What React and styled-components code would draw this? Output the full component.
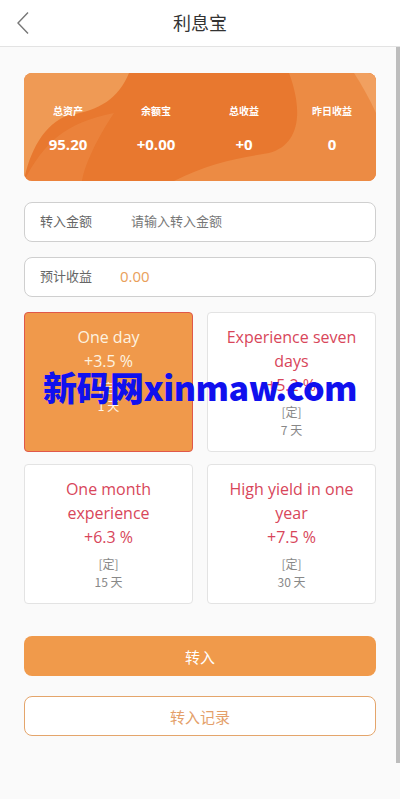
import React from 'react';
import styled, { createGlobalStyle } from 'styled-components';

const GlobalStyle = createGlobalStyle`
  html, body {
    margin: 0;
    padding: 0;
    background: #fafafa;
    font-family: "Noto Sans CJK SC", "Open Sans", sans-serif;
  }
  * { box-sizing: border-box; }
`;

const STATS = [
  { label: '总资产', value: '95.20' },
  { label: '余额宝', value: '+0.00' },
  { label: '总收益', value: '+0' },
  { label: '昨日收益', value: '0' },
];

const PLANS = [
  { title: 'One day', rate: '+3.5 %', days: '1 天', active: true },
  { title: 'Experience seven days', rate: '+5.2 %', days: '7 天' },
  { title: 'One month experience', rate: '+6.3 %', days: '15 天' },
  { title: 'High yield in one year', rate: '+7.5 %', days: '30 天' },
];

const BackIcon = () => (
  <svg width="14" height="24" viewBox="0 0 14 24" fill="none">
    <path d="M12 1.5 L2 12 L12 22.5" stroke="#777" strokeWidth="1.4" />
  </svg>
);

const BannerWaves = () => (
  <WaveSvg viewBox="0 0 352 108" preserveAspectRatio="none">
    <rect width="352" height="108" fill="#e8782f" />
    <path d="M0 0 H105 C95 25 75 38 45 42 C20 50 5 80 0 108 Z" fill="#ef9a55" />
    <path d="M0 108 C20 70 40 50 90 40 C70 70 60 95 58 108 Z" fill="#ec8a45" opacity="0.55" />
    <path d="M265 0 H352 V108 H150 C185 90 215 85 245 80 C275 72 280 40 265 0 Z" fill="#ec8b44" />
    <path d="M330 0 H352 V40 C345 25 338 12 330 0 Z" fill="#f1a060" />
  </WaveSvg>
);

export default function App() {
  return (
    <Page>
      <GlobalStyle />
      <Header>
        <BackButton><BackIcon /></BackButton>
        <Title>利息宝</Title>
      </Header>
      <Content>
        <Banner>
          <BannerWaves />
          {STATS.map((s) => (
            <Stat key={s.label}>
              <StatLabel>{s.label}</StatLabel>
              <StatValue>{s.value}</StatValue>
            </Stat>
          ))}
        </Banner>

        <Field>
          <FieldLabel>转入金额</FieldLabel>
          <Placeholder>请输入转入金额</Placeholder>
        </Field>
        <Field>
          <FieldLabel>预计收益</FieldLabel>
          <Income>0.00</Income>
        </Field>

        <PlanGrid>
          {PLANS.map((p) => (
            <Plan key={p.title} active={p.active}>
              <PlanTitle active={p.active}>{p.title}</PlanTitle>
              <PlanTitle active={p.active}>{p.rate}</PlanTitle>
              <PlanMeta active={p.active}>[定]</PlanMeta>
              <PlanMeta active={p.active}>{p.days}</PlanMeta>
            </Plan>
          ))}
        </PlanGrid>

        <PrimaryButton>转入</PrimaryButton>
        <OutlineButton>转入记录</OutlineButton>
      </Content>
      <Watermark>新码网xinmaw.com</Watermark>
      <ScrollThumb />
    </Page>
  );
}

const Page = styled.div`
  position: relative;
  min-height: 799px;
  background: #fafafa;
`;

const Header = styled.div`
  height: 47px;
  background: #fff;
  border-bottom: 1px solid #e3e3e3;
  display: flex;
  align-items: center;
  justify-content: center;
  position: relative;
`;

const BackButton = styled.div`
  position: absolute;
  left: 16px;
  top: 11px;
  display: flex;
`;

const Title = styled.div`
  font-size: 18px;
  color: #333;
  margin-top: -2px;
`;

const Content = styled.div`
  padding: 26px 24px 40px;
  display: flex;
  flex-direction: column;
`;

const Banner = styled.div`
  position: relative;
  height: 108px;
  border-radius: 8px;
  overflow: hidden;
  display: grid;
  grid-template-columns: repeat(4, 1fr);
  align-items: start;
  padding-top: 30px;
`;

const WaveSvg = styled.svg`
  position: absolute;
  inset: 0;
  width: 100%;
  height: 100%;
`;

const Stat = styled.div`
  position: relative;
  display: flex;
  flex-direction: column;
  align-items: center;
  color: #fff;
`;

const StatLabel = styled.div`
  font-size: 10px;
  font-weight: 700;
  line-height: 16px;
`;

const StatValue = styled.div`
  font-family: "Open Sans", "Noto Sans CJK SC", sans-serif;
  font-size: 15px;
  font-weight: 700;
  line-height: 20px;
  margin-top: 15px;
`;

const Field = styled.div`
  height: 40px;
  margin-top: 21px;
  border: 1px solid #cfcfcf;
  border-radius: 8px;
  background: #fff;
  display: flex;
  align-items: center;
  padding: 0 0 3px 15px;
  & + & { margin-top: 15px; }
`;

const FieldLabel = styled.div`
  font-size: 13px;
  color: #666;
  width: 76px;
  flex-shrink: 0;
`;

const Placeholder = styled.div`
  margin-left: 15px;
  font-size: 13px;
  color: #777;
`;

const Income = styled.div`
  margin-left: 4px;
  font-family: "Open Sans", sans-serif;
  font-size: 15px;
  color: #e9a05a;
`;

const PlanGrid = styled.div`
  display: grid;
  grid-template-columns: 1fr 1fr;
  column-gap: 14px;
  row-gap: 12px;
  margin-top: 15px;
`;

const Plan = styled.div`
  height: 140px;
  border-radius: 4px;
  border: 1px solid ${({ active }) => (active ? '#e0584a' : '#e3e3e3')};
  background: ${({ active }) => (active ? '#f0994b' : '#fff')};
  display: flex;
  flex-direction: column;
  align-items: center;
  text-align: center;
  padding: 12px 14px 0;
`;

const PlanTitle = styled.div`
  font-family: "Open Sans", "Noto Sans CJK SC", sans-serif;
  font-size: 16px;
  line-height: 24px;
  color: ${({ active }) => (active ? '#fdf3e0' : '#d8465a')};
`;

const PlanMeta = styled.div`
  font-size: 12px;
  line-height: 18px;
  color: ${({ active }) => (active ? '#fff5e8' : '#888')};
  ${PlanTitle} + & { margin-top: 6px; }
`;

const PrimaryButton = styled.div`
  height: 40px;
  margin-top: 32px;
  border-radius: 8px;
  background: #f09a4b;
  color: #fff;
  font-size: 15px;
  display: flex;
  align-items: center;
  justify-content: center;
`;

const OutlineButton = styled.div`
  height: 40px;
  margin-top: 20px;
  border-radius: 8px;
  border: 1px solid #e4a56b;
  background: #fff;
  color: #e4a06a;
  font-size: 15px;
  display: flex;
  align-items: center;
  justify-content: center;
`;

const Watermark = styled.div`
  position: absolute;
  left: 43px;
  top: 362px;
  font-family: "Noto Sans CJK SC", sans-serif;
  font-size: 34px;
  font-weight: 900;
  color: #1010ee;
  letter-spacing: -0.5px;
  pointer-events: none;
  white-space: nowrap;
`;

const ScrollThumb = styled.div`
  position: absolute;
  right: 0;
  top: 47px;
  width: 4px;
  height: 716px;
  background: #bdbdbd;
`;
